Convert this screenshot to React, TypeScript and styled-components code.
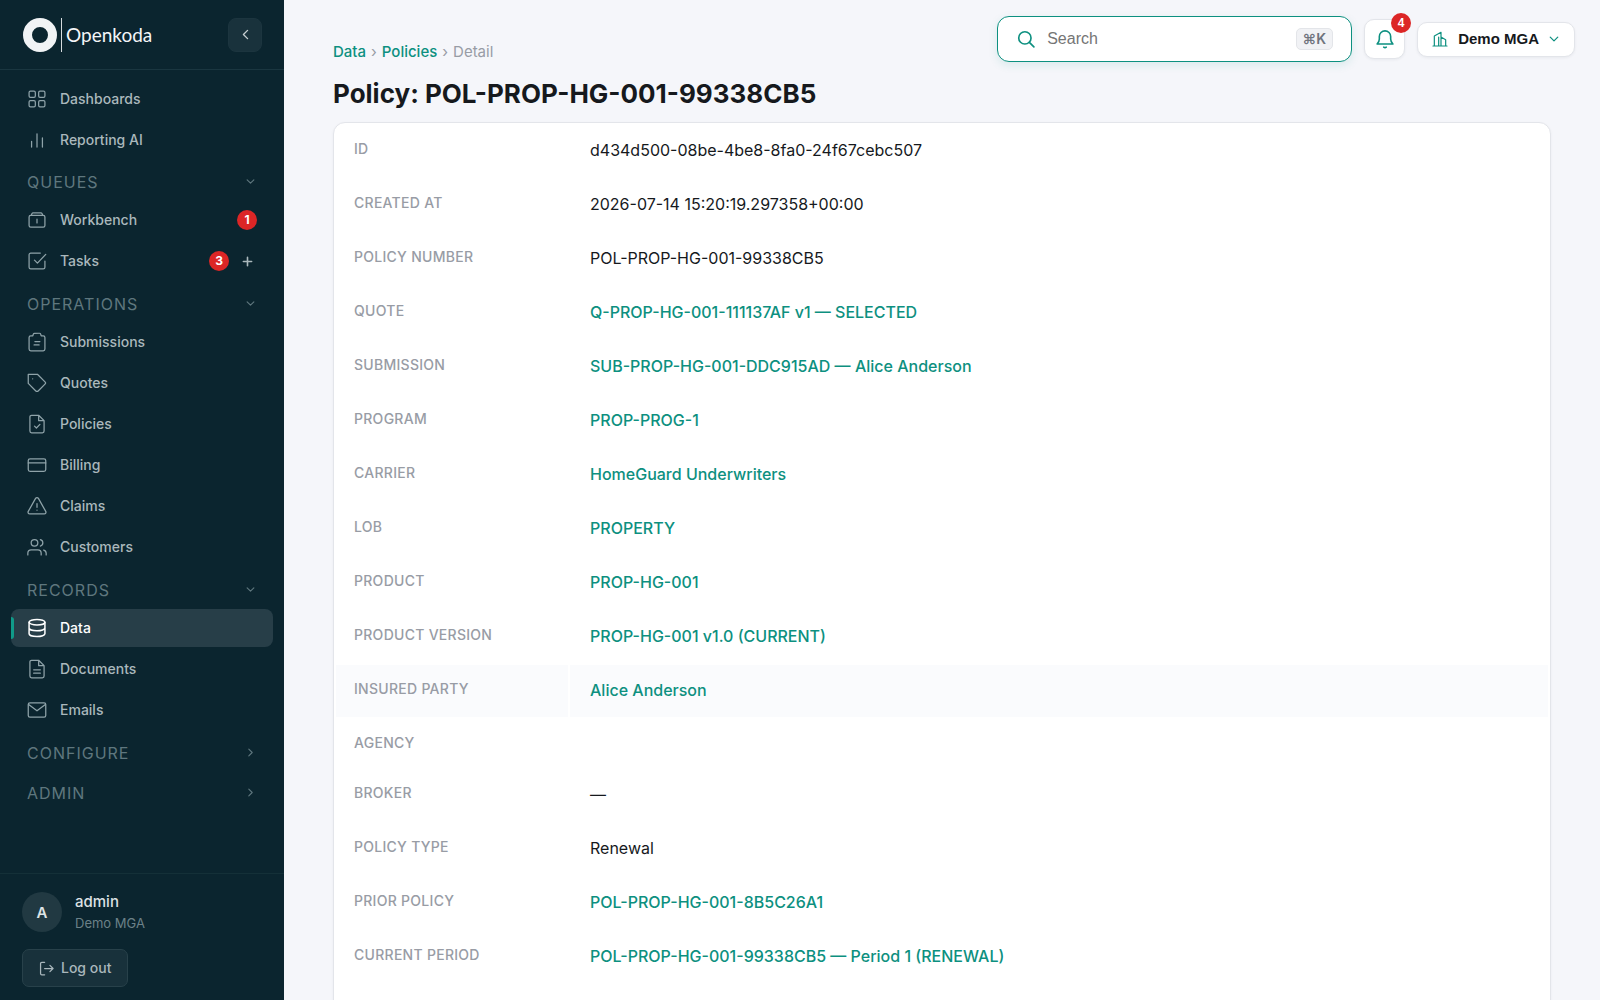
import React from "react";
import styled, { createGlobalStyle } from "styled-components";

const color = {
  side: "#0b252f",
  sideText: "#aab8bc",
  sideIcon: "#8fa3a9",
  sideMuted: "#5f777e",
  accent: "#0d9080",
  red: "#dc2626",
  ink: "#16191d",
  muted: "#989ca5",
  page: "#f5f6fa",
  line: "#e3e5ea",
};

const GlobalStyle = createGlobalStyle`
  *, *::before, *::after { box-sizing: border-box; }
  body {
    margin: 0;
    background: ${color.page};
    color: ${color.ink};
    font-family: Inter, "Liberation Sans", sans-serif;
    font-size: 16px;
  }
  a { text-decoration: none; }
  button { cursor: pointer; }
`;

const Shell = styled.div`
  display: flex;
  height: 100vh;
  overflow: hidden;
`;

/* ---------- Sidebar ---------- */

const Sidebar = styled.aside`
  flex: none;
  width: 284px;
  display: flex;
  flex-direction: column;
  background: ${color.side};
  color: ${color.sideText};
`;

const Brand = styled.div`
  display: flex;
  align-items: center;
  justify-content: space-between;
  height: 70px;
  padding: 0 22px 0 23px;
  border-bottom: 1px solid #1a3640;
`;

const BrandLink = styled.a`
  display: flex;
  align-items: center;
  gap: 4px;
  color: #f4f6f8;
  font: 400 19px/34px Lato, sans-serif;
`;

const CollapseButton = styled.button`
  display: grid;
  place-items: center;
  width: 34px;
  height: 34px;
  padding: 0;
  border: 1px solid #1c353f;
  border-radius: 8px;
  background: #19323c;
  color: #c5ced1;
`;

const Nav = styled.nav`
  flex: 1;
  min-height: 0;
  overflow: hidden;
  padding: 10px 11px;
`;

const List = styled.ul`
  list-style: none;
  margin: 0;
  padding: 0;
`;

const Item = styled.li<{ $active?: boolean }>`
  position: relative;
  display: flex;
  align-items: center;
  gap: 8px;
  height: 38px;
  margin-bottom: 3px;
  padding: 0 16px;
  border-radius: 8px;
  background: ${(p) => (p.$active ? "#273e48" : "transparent")};

  &::before {
    content: "";
    display: ${(p) => (p.$active ? "block" : "none")};
    position: absolute;
    left: 0;
    top: 8px;
    bottom: 8px;
    width: 3px;
    border-radius: 0 3px 3px 0;
    background: #109a89;
  }
`;

const ItemLink = styled.a<{ $active?: boolean }>`
  flex: 1;
  display: flex;
  align-items: center;
  gap: 13px;
  color: ${(p) => (p.$active ? "#ffffff" : color.sideText)};
  font-size: 14px;
  font-weight: 500;
  line-height: 24px;

  svg {
    color: ${(p) => (p.$active ? "#ffffff" : color.sideIcon)};
  }
`;

const Badge = styled.span`
  display: grid;
  place-items: center;
  width: 20px;
  height: 20px;
  border-radius: 10px;
  background: ${color.red};
  color: #fff;
  font-size: 12px;
  font-weight: 700;
  line-height: 20px;
`;

const AddButton = styled.button`
  display: grid;
  place-items: center;
  width: 20px;
  height: 20px;
  padding: 0;
  border: 0;
  background: none;
  color: ${color.sideText};
`;

const Group = styled.section`
  padding-bottom: 1px;
`;

const GroupButton = styled.button`
  display: flex;
  align-items: center;
  justify-content: space-between;
  width: 100%;
  height: 39px;
  padding: 0 18px 0 16px;
  border: 0;
  background: none;
  color: ${color.sideMuted};
  font: 400 16px/24px Inter, sans-serif;
  letter-spacing: 1px;
  text-transform: uppercase;
`;

const Account = styled.div`
  display: flex;
  flex-direction: column;
  align-items: flex-start;
  gap: 16px;
  padding: 17px 22px 13px;
  border-top: 1px solid #143038;
`;

const Profile = styled.div`
  display: flex;
  align-items: center;
  gap: 13px;
`;

const Avatar = styled.span`
  display: grid;
  place-items: center;
  width: 40px;
  height: 40px;
  border-radius: 50%;
  background: #213942;
  color: #dde3e5;
  font-size: 15px;
  font-weight: 600;
`;

const UserName = styled.div`
  color: #dbe1e4;
  font-size: 15px;
  font-weight: 500;
  line-height: 22px;
`;

const UserOrg = styled.div`
  color: #6b8188;
  font-size: 13px;
  line-height: 20px;
`;

const LogoutButton = styled.button`
  display: flex;
  align-items: center;
  gap: 7px;
  height: 38px;
  padding: 0 16px;
  border: 1px solid #28414a;
  border-radius: 7px;
  background: #18313b;
  color: #a9b7bc;
  font: 500 14px/24px Inter, sans-serif;
`;

/* ---------- Main ---------- */

const Main = styled.main`
  flex: 1;
  min-width: 0;
  overflow-y: auto;
  scrollbar-width: none;
`;

const TopRow = styled.header`
  display: flex;
  justify-content: space-between;
  align-items: flex-end;
  padding: 16px 25px 0 49px;
`;

const Breadcrumb = styled.nav`
  display: flex;
  gap: 5px;
  color: ${color.muted};
  font-size: 15px;
  line-height: 20px;

  a {
    color: ${color.accent};
    font-weight: 500;
  }
`;

const Tools = styled.div`
  display: flex;
  align-items: center;
  gap: 12px;
`;

const SearchBox = styled.label`
  display: flex;
  align-items: center;
  gap: 12px;
  width: 355px;
  height: 46px;
  padding: 0 18px 0 19px;
  border: 1px solid ${color.accent};
  border-radius: 12px;
  background: #fff;
  color: ${color.accent};
  box-shadow: 0 3px 10px rgba(13, 144, 128, 0.12);
`;

const SearchInput = styled.input`
  flex: 1;
  min-width: 0;
  padding: 0;
  border: 0;
  outline: 0;
  background: none;
  color: ${color.ink};
  font: 400 16px/24px "Liberation Sans", Arial, sans-serif;

  &::placeholder {
    color: #757575;
    opacity: 1;
  }
`;

const Key = styled.kbd`
  height: 22px;
  padding: 0 6px;
  border: 1px solid #e3e5e9;
  border-radius: 5px;
  background: #f1f2f5;
  color: #6f747d;
  font: 600 14px/20px Inter, "DejaVu Sans", sans-serif;
`;

const BellButton = styled.button`
  position: relative;
  display: grid;
  place-items: center;
  width: 41px;
  height: 40px;
  padding: 0;
  border: 1px solid ${color.line};
  border-radius: 10px;
  background: #fff;
  color: ${color.accent};
  box-shadow: 0 1px 3px rgba(20, 30, 50, 0.06);

  ${Badge} {
    position: absolute;
    top: -7px;
    right: -7px;
    font-family: "Liberation Sans", Arial, sans-serif;
  }
`;

const OrgButton = styled.button`
  display: flex;
  align-items: center;
  gap: 10px;
  height: 35px;
  padding: 0 15px 0 14px;
  border: 1px solid ${color.line};
  border-radius: 10px;
  background: #fff;
  color: ${color.ink};
  font: 700 15px/20px "Liberation Sans", Arial, sans-serif;
  box-shadow: 0 1px 3px rgba(20, 30, 50, 0.06);

  svg {
    color: ${color.accent};
  }
`;

const Content = styled.div`
  padding: 14px 49px 40px 49px;
`;

const Title = styled.h1`
  margin: 0 0 10px;
  font-size: 26px;
  font-weight: 700;
  line-height: 36px;
`;

const Card = styled.div`
  padding-bottom: 40px;
  border: 1px solid ${color.line};
  border-radius: 12px;
  background: #fff;
  box-shadow: 0 1px 3px rgba(20, 30, 50, 0.05);
`;

const DetailTable = styled.table`
  width: 100%;
  border-collapse: separate;
  border-spacing: 2px;
`;

const DetailRow = styled.tr<{ $hover?: boolean }>`
  th,
  td {
    background: ${(p) => (p.$hover ? "#fafbfd" : "transparent")};
  }
`;

const Label = styled.th`
  width: 232px;
  padding: 14px 18px;
  text-align: left;
  vertical-align: top;
  color: ${color.muted};
  font-size: 14px;
  font-weight: 500;
  line-height: 20px;
  letter-spacing: 0.02em;
  text-transform: uppercase;
`;

const Value = styled.td`
  padding: 13px 20px 15px;
  vertical-align: top;
  font-size: 16px;
  line-height: 24px;

  &:empty {
    padding: 0;
  }

  a {
    color: ${color.accent};
    font-weight: 500;
  }
`;

/* ---------- Icons ---------- */

const shapes: Record<string, React.ReactNode> = {
  grid: (
    <>
      <rect x="2.5" y="2.5" width="7.5" height="7.5" rx="1.6" />
      <rect x="14" y="2.5" width="7.5" height="7.5" rx="1.6" />
      <rect x="2.5" y="14" width="7.5" height="7.5" rx="1.6" />
      <rect x="14" y="14" width="7.5" height="7.5" rx="1.6" />
    </>
  ),
  bars: <path d="M5.5 20.500v-7M12 20.500v-16M18.500 20.500v-11" />,
  toolbox: (
    <>
      <rect x="2.500" y="6.500" width="19" height="14" rx="2" />
      <path d="M5 6.500l1-2.200a1.500 1.500 0 0 1 1.400-.8h9.200a1.500 1.500 0 0 1 1.400.8l1 2.200M12 11v4.500" />
    </>
  ),
  check: (
    <path d="M9 11l3.500 3.500L22.500 4M21.500 12v7.500a2 2 0 0 1-2 2h-15a2 2 0 0 1-2-2v-15a2 2 0 0 1 2-2H16" />
  ),
  clipboard: (
    <path d="M7 4.500H4.500a2 2 0 0 0-2 2v14a2 2 0 0 0 2 2h15a2 2 0 0 0 2-2v-14a2 2 0 0 0-2-2H17l-.6-2a1.500 1.500 0 0 0-1.400-1H9a1.500 1.500 0 0 0-1.400 1zM9.500 11.500h6M8.500 15.500h6" />
  ),
  tag: (
    <>
      <path d="M21.600 13.410l-8.180 8.170a2 2 0 0 1-2.830 0L1.500 12.500V1.500h11l9.100 9.090a2 2 0 0 1 0 2.820z" />
      <path d="M6.800 7h.01" />
    </>
  ),
  fileCheck: (
    <path d="M14 1.500H5.500a2 2 0 0 0-2 2v17a2 2 0 0 0 2 2h13a2 2 0 0 0 2-2V8zV8h6.500M9 14.500l2.300 2.300L15.500 12.500" />
  ),
  card: (
    <>
      <rect x="1.500" y="4.500" width="21" height="15" rx="2.200" />
      <path d="M1.500 9.500h21" />
    </>
  ),
  alert: (
    <path d="M10.290 2.860L1.520 18.500a2 2 0 0 0 1.710 3h17.540a2 2 0 0 0 1.710-3L13.710 2.860a2 2 0 0 0-3.420 0zM12 9v4.500M12 17h.01" />
  ),
  users: (
    <>
      <path d="M17 21.500v-2a4 4 0 0 0-4-4H5a4 4 0 0 0-4 4v2M23 21.500v-2a4 4 0 0 0-3-3.870M16 3.130a4 4 0 0 1 0 7.750" />
      <circle cx="9" cy="7" r="4" />
    </>
  ),
  database: (
    <>
      <ellipse cx="12" cy="5" rx="9.500" ry="3.300" />
      <path d="M2.500 5v14c0 1.800 4.200 3.300 9.500 3.300s9.500-1.500 9.500-3.300V5M2.500 12c0 1.800 4.200 3.300 9.500 3.300s9.500-1.500 9.500-3.300" />
    </>
  ),
  file: (
    <path d="M14 1.500H5.500a2 2 0 0 0-2 2v17a2 2 0 0 0 2 2h13a2 2 0 0 0 2-2V8zV8h6.500M8 13h8M8 17h8" />
  ),
  mail: (
    <>
      <rect x="1.500" y="3.500" width="21" height="17" rx="2" />
      <path d="M2 5.500l10 7.500 10-7.500" />
    </>
  ),
  search: (
    <>
      <circle cx="10.500" cy="10.500" r="8.200" />
      <path d="M16.500 16.500L22.500 22.500" />
    </>
  ),
  bell: (
    <path d="M2.500 18c1.700-1.600 2.700-3 2.700-6V9a6.800 6.800 0 0 1 13.600 0v3c0 3 1 4.400 2.700 6zM10.500 21.800q1.500 1.300 3 0" />
  ),
  building: (
    <path d="M1.500 22.500h21M3.500 22.500V7.500L13.500 2v20.500M13.500 9l7 4v9.500M10 22.500V9" />
  ),
  logout: (
    <path d="M9 22H4.500a2 2 0 0 1-2-2V4a2 2 0 0 1 2-2H9M17.500 17l5-5-5-5M22 12H9" />
  ),
  plus: <path d="M12 3v18M3 12h18" />,
  down: <path d="M3 7.500l9 9 9-9" />,
  right: <path d="M7.500 3l9 9-9 9" />,
  left: <path d="M16.500 3l-9 9 9 9" />,
};

function Icon({ name, size = 20, stroke = 1.5 }: { name: string; size?: number; stroke?: number }) {
  return (
    <svg
      width={size}
      height={size}
      viewBox="0 0 24 24"
      fill="none"
      stroke="currentColor"
      strokeWidth={stroke}
      strokeLinecap="round"
      strokeLinejoin="round"
      aria-hidden="true"
    >
      {shapes[name]}
    </svg>
  );
}

/* ---------- Data ---------- */

type NavEntry = { icon: string; label: string; count?: number; add?: boolean; active?: boolean };

const topItems: NavEntry[] = [
  { icon: "grid", label: "Dashboards" },
  { icon: "bars", label: "Reporting AI" },
];

const groups: { title: string; items: NavEntry[] }[] = [
  {
    title: "Queues",
    items: [
      { icon: "toolbox", label: "Workbench", count: 1 },
      { icon: "check", label: "Tasks", count: 3, add: true },
    ],
  },
  {
    title: "Operations",
    items: [
      { icon: "clipboard", label: "Submissions" },
      { icon: "tag", label: "Quotes" },
      { icon: "fileCheck", label: "Policies" },
      { icon: "card", label: "Billing" },
      { icon: "alert", label: "Claims" },
      { icon: "users", label: "Customers" },
    ],
  },
  {
    title: "Records",
    items: [
      { icon: "database", label: "Data", active: true },
      { icon: "file", label: "Documents" },
      { icon: "mail", label: "Emails" },
    ],
  },
  { title: "Configure", items: [] },
  { title: "Admin", items: [] },
];

const details: { label: string; value: string; link?: boolean; hover?: boolean }[] = [
  { label: "ID", value: "d434d500-08be-4be8-8fa0-24f67cebc507" },
  { label: "Created at", value: "2026-07-14 15:20:19.297358+00:00" },
  { label: "Policy number", value: "POL-PROP-HG-001-99338CB5" },
  { label: "Quote", value: "Q-PROP-HG-001-111137AF v1 — SELECTED", link: true },
  { label: "Submission", value: "SUB-PROP-HG-001-DDC915AD — Alice Anderson", link: true },
  { label: "Program", value: "PROP-PROG-1", link: true },
  { label: "Carrier", value: "HomeGuard Underwriters", link: true },
  { label: "LOB", value: "PROPERTY", link: true },
  { label: "Product", value: "PROP-HG-001", link: true },
  { label: "Product version", value: "PROP-HG-001 v1.0 (CURRENT)", link: true },
  { label: "Insured party", value: "Alice Anderson", link: true, hover: true },
  { label: "Agency", value: "" },
  { label: "Broker", value: "—" },
  { label: "Policy type", value: "Renewal" },
  { label: "Prior policy", value: "POL-PROP-HG-001-8B5C26A1", link: true },
  { label: "Current period", value: "POL-PROP-HG-001-99338CB5 — Period 1 (RENEWAL)", link: true },
];

function NavList({ items }: { items: NavEntry[] }) {
  return (
    <List>
      {items.map((it) => (
        <Item key={it.label} $active={it.active}>
          <ItemLink href="#" $active={it.active} aria-current={it.active ? "page" : undefined}>
            <Icon name={it.icon} stroke={it.active ? 1.8 : 1.5} />
            {it.label}
          </ItemLink>
          {it.count && <Badge>{it.count}</Badge>}
          {it.add && (
            <AddButton aria-label="Add task">
              <Icon name="plus" size={11} stroke={3.5} />
            </AddButton>
          )}
        </Item>
      ))}
    </List>
  );
}

export default function App() {
  return (
    <>
      <GlobalStyle />
      <Shell>
        <Sidebar>
          <Brand>
            <BrandLink href="#">
              <svg width="39" height="34" viewBox="0 0 39 34" fill="none" aria-hidden="true">
                <circle cx="17" cy="17" r="12.500" stroke="#f1f3f5" strokeWidth="9" />
                <path d="M38.500 0v34" stroke="#d5dbde" />
              </svg>
              Openkoda
            </BrandLink>
            <CollapseButton aria-label="Collapse sidebar">
              <Icon name="left" size={11} stroke={3} />
            </CollapseButton>
          </Brand>
          <Nav aria-label="Main">
            <NavList items={topItems} />
            {groups.map((g) => (
              <Group key={g.title}>
                <GroupButton aria-expanded={g.items.length > 0}>
                  {g.title}
                  <Icon name={g.items.length > 0 ? "down" : "right"} size={9} stroke={3} />
                </GroupButton>
                {g.items.length > 0 && <NavList items={g.items} />}
              </Group>
            ))}
          </Nav>
          <Account>
            <Profile>
              <Avatar>A</Avatar>
              <div>
                <UserName>admin</UserName>
                <UserOrg>Demo MGA</UserOrg>
              </div>
            </Profile>
            <LogoutButton>
              <Icon name="logout" size={15} stroke={2} />
              Log out
            </LogoutButton>
          </Account>
        </Sidebar>
        <Main>
          <TopRow>
            <Breadcrumb aria-label="Breadcrumb">
              <a href="#">Data</a>
              <span>›</span>
              <a href="#">Policies</a>
              <span>›</span>
              <span>Detail</span>
            </Breadcrumb>
            <Tools>
              <SearchBox>
                <Icon name="search" size={18} stroke={2.2} />
                <SearchInput type="search" placeholder="Search" aria-label="Search" />
                <Key>⌘K</Key>
              </SearchBox>
              <BellButton aria-label="Notifications">
                <Icon name="bell" size={20} stroke={1.9} />
                <Badge>4</Badge>
              </BellButton>
              <OrgButton aria-haspopup="menu">
                <Icon name="building" size={16} stroke={1.8} />
                Demo MGA
                <Icon name="down" size={10} stroke={3} />
              </OrgButton>
            </Tools>
          </TopRow>
          <Content>
            <Title>Policy: POL-PROP-HG-001-99338CB5</Title>
            <Card>
              <DetailTable>
                <tbody>
                  {details.map((d) => (
                    <DetailRow key={d.label} $hover={d.hover}>
                      <Label scope="row">{d.label}</Label>
                      <Value>{d.link ? <a href="#">{d.value}</a> : d.value || null}</Value>
                    </DetailRow>
                  ))}
                </tbody>
              </DetailTable>
            </Card>
          </Content>
        </Main>
      </Shell>
    </>
  );
}
